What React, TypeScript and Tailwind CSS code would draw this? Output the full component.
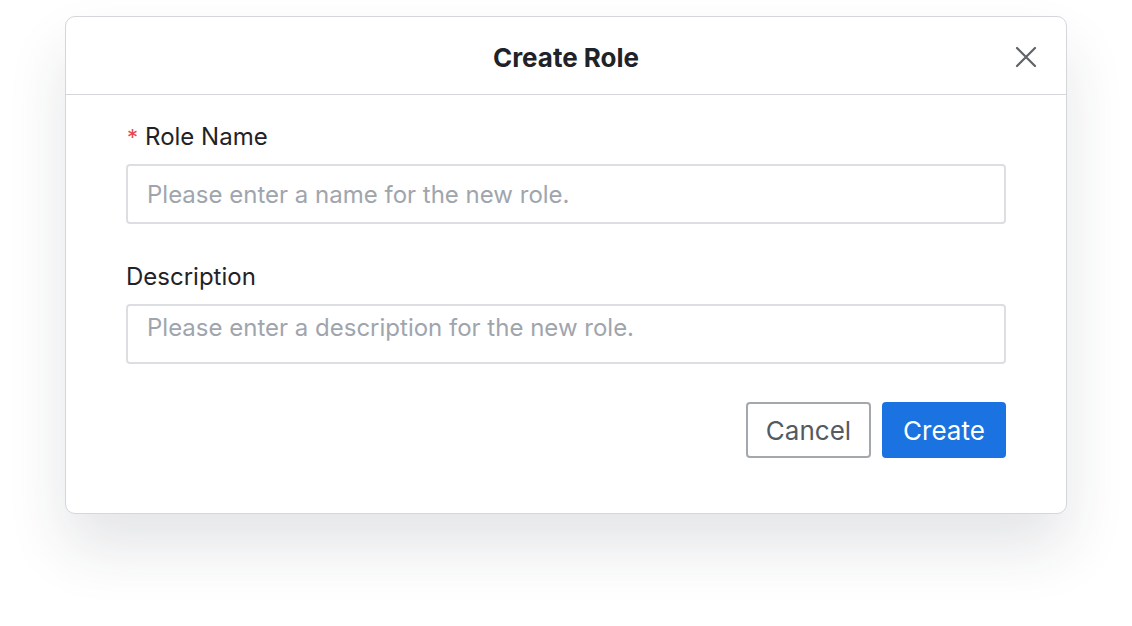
import React from "react";

export default function App() {
  return (
    <div className="w-[1132px] h-[626px] bg-white pt-[16px] pl-[65px]" style={{ fontFamily: "Inter, 'Noto Sans', sans-serif" }}>
      <div className="w-[1002px] bg-white border border-[#d4d6da] rounded-[10px] shadow-[0_34px_60px_rgba(31,41,55,0.12)]">
        <div className="h-[78px] pt-[3px] border-b border-[#d4d6da] flex items-center justify-center relative">
          <span className="text-[26px] font-bold text-[#1f2329]">Create Role</span>
          <button className="absolute right-[28px] top-[28px] w-[24px] h-[24px] flex items-center justify-center">
            <svg width="22" height="22" viewBox="0 0 22 22" fill="none" stroke="#5f6368" strokeWidth="2.2" strokeLinecap="round">
              <path d="M2 2L20 20M20 2L2 20" />
            </svg>
          </button>
        </div>
        <div className="pt-[26px] px-[60px] pb-[55px]">
          <div className="h-[32px] flex items-center text-[24px] text-[#1f2329] mb-[11px]">
            <span className="text-[#e5484d] mr-[7px] text-[22px] ml-[1px]">*</span>
            Role Name
          </div>
          <input
            className="w-full h-[60px] border-2 border-[#dcdee2] rounded-[4px] px-[19px] text-[24px] text-[#1f2329] placeholder:text-[#a0a5ad] outline-none"
            placeholder="Please enter a name for the new role."
          />
          <div className="h-[32px] flex items-center text-[24px] text-[#1f2329] mt-[37px] mb-[11px]">Description</div>
          <textarea
            className="w-full h-[60px] border-2 border-[#dcdee2] rounded-[4px] px-[19px] pt-[4px] text-[24px] text-[#1f2329] placeholder:text-[#a0a5ad] outline-none resize-none block"
            placeholder="Please enter a description for the new role."
          />
          <div className="flex justify-end gap-[11px] mt-[38px]">
            <button className="w-[125px] h-[56px] border-2 border-[#a3a8af] rounded-[4px] text-[26px] text-[#555a62] bg-white">Cancel</button>
            <button className="w-[124px] h-[56px] rounded-[4px] text-[26px] text-white bg-[#1a73e0]">Create</button>
          </div>
        </div>
      </div>
    </div>
  );
}
